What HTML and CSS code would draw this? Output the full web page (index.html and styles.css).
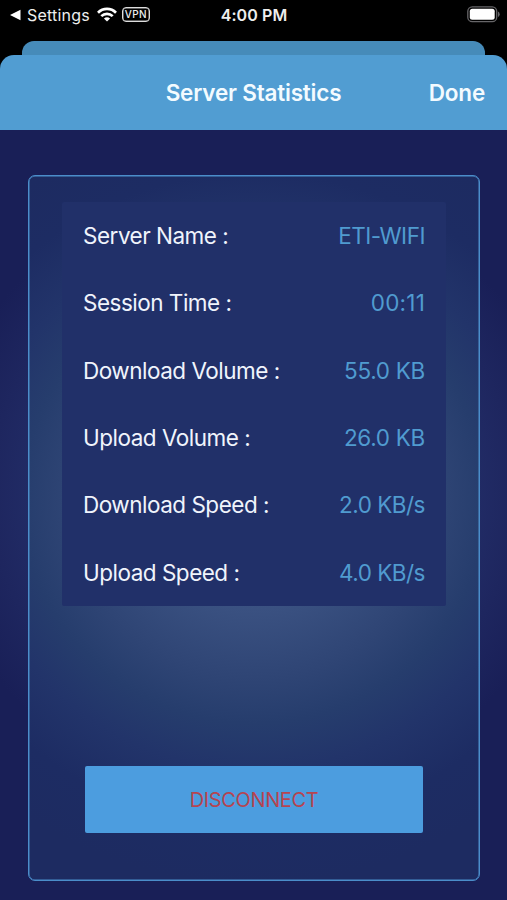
FILE: index.html
```html
<!DOCTYPE html>
<html lang="en">
<head>
<meta charset="utf-8">
<title>Server Statistics</title>
<link rel="stylesheet" href="styles.css">
</head>
<body>
<div class="phone">
  <header class="status">
    <div class="status-left">
      <svg class="back" viewBox="0 0 11 12"><path d="M0 6 10.500 .8V11.200Z" fill="#fff"/></svg>
      <span class="back-label">Settings</span>
      <svg class="wifi" viewBox="0 0 20 15" fill="none" stroke="#fff" stroke-width="2.700"><path d="M1 5.700C6 .7 14 .7 19 5.700M4.300 9.100C7.500 6 12.500 6 15.700 9.100"/><path d="M10 14.500 6.900 11.400Q10 8.900 13.100 11.400Z" fill="#fff" stroke="none"/></svg>
      <span class="vpn">VPN</span>
    </div>
    <time class="clock">4:00 PM</time>
    <svg class="battery" viewBox="0 0 33 17"><rect x=".8" y=".8" width="28.900" height="14.900" rx="4.500" fill="none" stroke="#666568" stroke-width="1.300"/><rect x="2.800" y="2.800" width="24.900" height="10.900" rx="2.500" fill="#fff"/><path d="M31 5.500Q32.700 6.300 32.700 8.200T31 11Z" fill="#666568"/></svg>
  </header>
  <div class="sheet-back"></div>
  <section class="sheet">
    <nav class="navbar">
      <h1 class="title">Server Statistics</h1>
      <span class="done">Done</span>
    </nav>
    <main class="content">
      <div class="card">
        <dl class="stats">
          <div class="row"><dt>Server Name :</dt><dd>ETI-WIFI</dd></div>
          <div class="row"><dt>Session Time :</dt><dd class="time">00:11</dd></div>
          <div class="row"><dt>Download Volume :</dt><dd class="volume">55.0 KB</dd></div>
          <div class="row"><dt>Upload Volume :</dt><dd class="volume">26.0 KB</dd></div>
          <div class="row"><dt>Download Speed :</dt><dd>2.0 KB/s</dd></div>
          <div class="row"><dt>Upload Speed :</dt><dd>4.0 KB/s</dd></div>
        </dl>
        <button class="disconnect">DISCONNECT</button>
      </div>
    </main>
  </section>
</div>
</body>
</html>
```
FILE: styles.css
```css
* { box-sizing: border-box; }
body { margin: 0; background: #000; font-family: Inter, "Liberation Sans", sans-serif; }
.phone { width: 507px; height: 900px; display: flex; flex-direction: column; overflow: hidden; background: #000; }
.status { height: 41px; display: grid; grid-template-columns: 1fr auto 1fr; align-items: start; padding: 5px 7px 0 10px; color: #eee; }
.status-left { display: flex; align-items: center; height: 19px; }
.back { width: 11px; height: 12px; }
.back-label { font-size: 16px; letter-spacing: .2px; margin-left: 6px; }
.wifi { width: 20px; height: 15px; margin-left: 7px; }
.vpn { margin-left: 5px; width: 28px; height: 15px; border: 1px solid #ddd; box-shadow: inset 0 0 0 .5px #bbb; border-radius: 4px; font-size: 10px; line-height: 13px; font-weight: 500; letter-spacing: .4px; text-align: center; }
.clock { font-size: 16px; line-height: 20px; font-weight: 600; letter-spacing: .1px; margin-right: 2px; }
.battery { width: 33px; height: 17px; margin-top: 1px; justify-self: end; }
.sheet-back { height: 14px; margin: 0 22px; background: #468bb9; border-radius: 12px 12px 0 0; flex: none; }
.sheet { flex: 1; display: flex; flex-direction: column; border-radius: 14px 14px 0 0; overflow: hidden; }
.navbar { height: 75px; flex: none; display: grid; grid-template-columns: 1fr auto 1fr; align-items: center; padding: 0 22px; background: #519dd2; color: #f3fbff; }
.title { grid-column: 2; margin: 0; font-size: 22.500px; font-weight: 600; letter-spacing: -.2px; }
.done { justify-self: end; font-size: 22.500px; font-weight: 600; letter-spacing: -.2px; }
.content { flex: 1; padding: 45px 27px 19px 28px; background: radial-gradient(ellipse 320px 310px at 50% 47%, #25306a 0%, #212b65 70%, #1e265f 82%, #191f57 100%); }
.card { height: 706px; display: flex; flex-direction: column; align-items: center; justify-content: space-between; padding: 26px 33px 47px; border: 1px solid #4b8dca; box-shadow: inset 0 0 0 .5px #4b8dca; border-radius: 7px; background: radial-gradient(ellipse 400px 385px at 50% 46%, #3f5787 0%, #3b5282 27%, #2f4575 46%, #263d6d 58%, #22346a 70%, #1d2c63 85%, #1d2b61 100%); }
.stats { width: 384px; height: 404px; margin: 0; display: grid; grid-template-rows: repeat(6, 1fr); padding: 0 21px; background: #213069; border-radius: 2px; }
.row { display: flex; align-items: center; justify-content: space-between; font-size: 22.500px; }
.row dt { color: #f0f4fc; letter-spacing: -.5px; }
.row dd { margin: 0; color: #509bd0; letter-spacing: -.5px; }
.row .time { letter-spacing: .2px; }
.row .volume { letter-spacing: -.3px; }
.disconnect { width: 338px; height: 67px; padding: 0; border: 0; border-radius: 2px; background: #4c9ddf; color: #b64450; font: 400 20px Inter, "Liberation Sans", sans-serif; letter-spacing: -.35px; }
```
